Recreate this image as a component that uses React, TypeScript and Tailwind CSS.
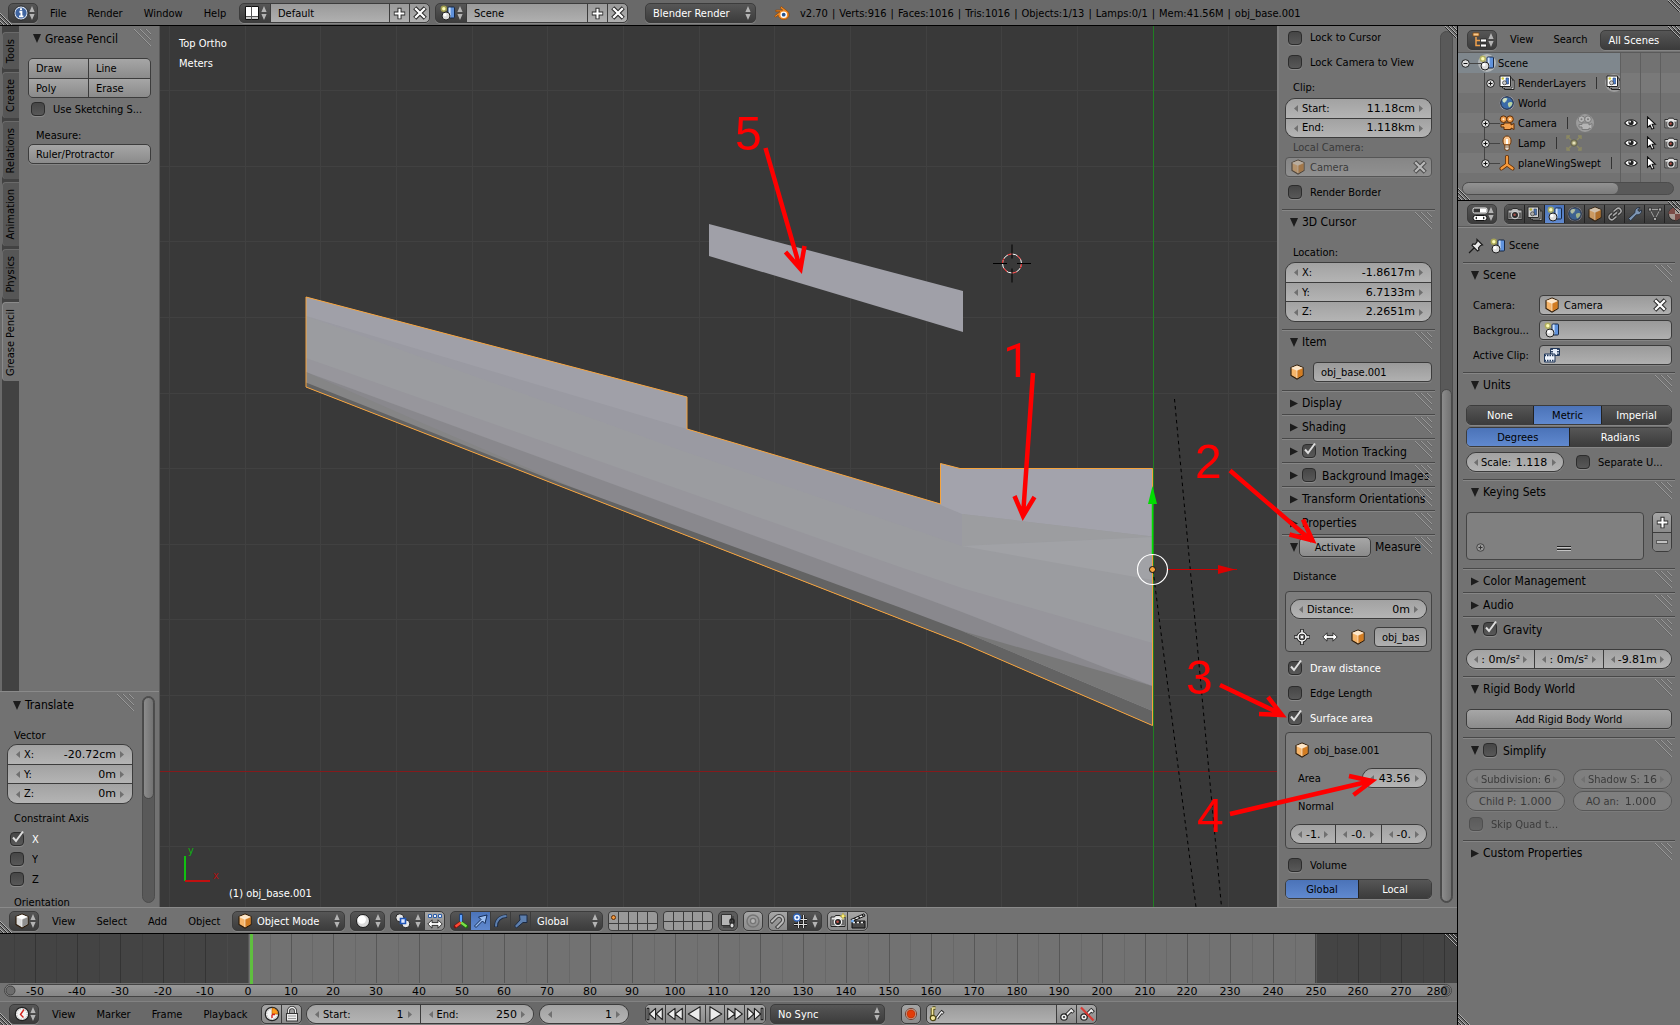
import { ReactNode } from "react";

const WIDGET = "h-5 shrink-0 border border-[#3c3c3c] shadow-[0_1px_0_#858585]";
const TOOL = "bg-gradient-to-b from-[#a6a6a6] to-[#8b8b8b]";
const FIELD = "bg-gradient-to-b from-[#9a9a9a] to-[#b0b0b0]";
const NUMBER = "bg-gradient-to-b from-[#a2a2a2] to-[#b4b4b4]";
const DARK = "bg-gradient-to-b from-[#565656] to-[#3c3c3c]";
const BLUE = "bg-gradient-to-b from-[#4b73b8] to-[#6089cf]";

/* ---------- icons ---------- */

function Icon({ size = 16, children, className = "" }: { size?: number; children: ReactNode; className?: string }) {
  return (
    <svg aria-hidden="true" width={size} height={size} viewBox="0 0 16 16" className={"shrink-0 " + className}>
      {children}
    </svg>
  );
}

const UpDown = () => (
  <svg aria-hidden="true" width="6" height="14" viewBox="0 0 6 14" className="shrink-0" fill="#b4b4b4">
    <path d="M3 0 L5.6 6 H.4Z M3 14 L5.6 8 H.4Z" />
  </svg>
);

const InfoIcon = () => (
  <Icon>
    <circle cx="8" cy="8" r="7" fill="#dfe6f0" stroke="#10141c" strokeWidth=".8" />
    <circle cx="8" cy="8" r="5.6" fill="#3f64a0" />
    <path d="M8 3.2v1.9M6.4 6.8H8.4V11M6 11.4h4.4" stroke="#fff" strokeWidth="1.9" fill="none" />
  </Icon>
);

const LayoutIcon = () => (
  <Icon>
    <path d="M1.500 1.500h13v13h-13z" fill="#fff" stroke="#111" />
    <path d="M7.500 1.500v13M2 11.500h12" stroke="#555" fill="none" />
    <path d="M8 12h6v2H8zM2 12h5v2H2z" fill="#ccc" />
  </Icon>
);

const SceneIcon = ({ size = 16 }: { size?: number }) => (
  <Icon size={size}>
    <rect x="8" y="2" width="6.500" height="11" rx="1" fill="#5f92dc" stroke="#172742" />
    <rect x="8.600" y="2.600" width="2" height="9.500" fill="#cfe0fa" />
    <circle cx="3.800" cy="3.800" r="3.200" fill="#b3b04f" opacity=".8" />
    <circle cx="3.800" cy="3.800" r="1.700" fill="#fdfbb5" />
    <circle cx="6" cy="11" r="4" fill="#dcdcdc" stroke="#222" />
    <circle cx="4.900" cy="9.800" r="1.700" fill="#fff" />
  </Icon>
);

const PlusIcon = () => (
  <Icon size={13}>
    <path d="M8 1v14M1 8h14" stroke="#2a2a2a" strokeWidth="5" />
    <path d="M8 2v12M2 8h12" stroke="#fff" strokeWidth="2.600" />
  </Icon>
);
const CrossIcon = () => (
  <Icon size={14}>
    <path d="M2 2l12 12M14 2 2 14" stroke="#2a2a2a" strokeWidth="5" />
    <path d="M2.500 2.500l11 11M13.500 2.500l-11 11" stroke="#fff" strokeWidth="2.600" />
  </Icon>
);

const BlenderLogo = () => (
  <Icon>
    <path d="M7.300 1.500 13.500 6.200C17 9.600 14.200 14.500 9.700 14.500 6.500 14.500 4.200 12.300 4.200 10.200L1.600 12.200.5 11 6 6.700H1.800V5.100h6.900L6.200 2.900z" fill="#f08a24" stroke="#8a4508" strokeWidth=".7" />
    <circle cx="9.700" cy="9.700" r="3.300" fill="#fff" />
    <circle cx="9.700" cy="9.700" r="1.900" fill="#27548e" />
  </Icon>
);

function Cube({ white = false, size = 16 }: { white?: boolean; size?: number }) {
  const [a, b, c] = white ? ["#ffffff", "#d9d9d9", "#8f8f8f"] : ["#fde6c8", "#f6b56a", "#d27c22"];
  return (
    <Icon size={size}>
      <path d="M8 1 14 3.500V11.500L8 15 2 11.500V3.500Z" fill={b} stroke="#2b1805" strokeWidth="1.100" />
      <path d="M8 1.500 13.500 3.700 8 6.300 2.500 3.700Z" fill={a} />
      <path d="M8 6.300 13.500 3.900V11.200L8 14.300Z" fill={c} />
      <path d="M2.600 3.900 8 6.300 13.400 3.900M8 6.300V14.300" stroke="#fff" strokeWidth=".7" opacity=".8" fill="none" />
    </Icon>
  );
}

const SphereIcon = () => (
  <Icon>
    <circle cx="8" cy="8" r="6.500" fill="#dadada" stroke="#1a1a1a" />
    <circle cx="6.800" cy="6.600" r="4.200" fill="#fff" />
  </Icon>
);

const PivotIcon = () => (
  <Icon>
    <circle cx="4.800" cy="4.800" r="4" fill="#e8e8e8" stroke="#222" />
    <circle cx="10.800" cy="10.800" r="4" fill="#e8e8e8" stroke="#222" />
    <path d="M5.500 5.500h5v5h-5z" fill="#dfe9ff" stroke="#1f55b8" strokeWidth="1.600" />
  </Icon>
);

const HArrow = ({ dots = false }: { dots?: boolean }) => (
  <Icon>
    <path
      d="M.8 10 5 5.800V8.600h6V5.800L15.200 10 11 14.200v-2.800H5v2.800z"
      fill="#fff"
      stroke="#222"
      strokeWidth=".9"
      transform={dots ? "translate(0 1)" : "translate(0 -2)"}
    />
    {dots && <path d="M1.500 1.500h3v3h-3zM6.500 1.500h3v3h-3zM11.500 1.500h3v3h-3z" fill="#e8f0ff" stroke="#2b5ca8" />}
  </Icon>
);

const AxesIcon = () => (
  <Icon>
    <path d="M8 9.500V2" stroke="#1b3f7a" strokeWidth="3.600" strokeLinecap="round" />
    <path d="M8 9.500 2.500 13.500" stroke="#7a1212" strokeWidth="3.600" strokeLinecap="round" />
    <path d="M8 9.500 13.500 13.500" stroke="#1e6b12" strokeWidth="3.600" strokeLinecap="round" />
    <path d="M8 9V2" stroke="#5ca0ff" strokeWidth="2" />
    <path d="M8 9.500 2.500 13.500" stroke="#ff4a33" strokeWidth="2.200" />
    <path d="M8 9.500 13.500 13.500" stroke="#7be04a" strokeWidth="2.200" />
  </Icon>
);
const DiagArrow = () => (
  <Icon>
    <path d="M1.500 13 8 6.500 5.500 4 14 2 12 10.500 9.500 8 3 14.500z" fill="#9dc0f2" stroke="#142c56" />
  </Icon>
);
const ArcIcon = () => (
  <Icon>
    <path d="M3 14C3 7 7 3.500 14 3" stroke="#1c2a42" strokeWidth="3.600" fill="none" />
    <path d="M3 13.500C3 7 7 3.500 13.500 3" stroke="#5d7fae" strokeWidth="2" fill="none" />
  </Icon>
);
const ScaleIcon = () => (
  <Icon>
    <path d="M6.500 2h7.500v7.500H10L3.500 15 1.500 13 7 7z" fill="#5d7fae" stroke="#1c2a42" />
  </Icon>
);

const LayersLockIcon = () => (
  <Icon>
    <path d="M1.500 1.500h10v11h-10z" fill="#b5b5b5" stroke="#333" />
    <path d="M3 14h10M13 3v9" stroke="#333" />
    <rect x="10" y="6" width="4" height="5" rx="2" fill="none" stroke="#222" strokeWidth="1.500" />
    <rect x="10" y="10" width="4" height="5" rx="2" fill="#ddd" stroke="#222" />
  </Icon>
);
const PropIcon = () => (
  <Icon>
    <circle cx="8" cy="8" r="6" fill="none" stroke="#757575" strokeWidth="1.500" />
    <circle cx="8" cy="8" r="2.600" fill="#b5b5b5" stroke="#757575" strokeWidth="1.300" />
  </Icon>
);
const MagnetIcon = () => (
  <Icon>
    <g transform="rotate(45 8 8)" fill="none">
      <path d="M4 14.500V6.500a4 4 0 0 1 8 0V14.500" stroke="#444" strokeWidth="4" />
      <path d="M4 13.500V6.500a4 4 0 0 1 8 0V13.500" stroke="#bbb" strokeWidth="2" />
    </g>
  </Icon>
);
const SnapIcon = () => (
  <Icon>
    <path d="M6.500 3v12M11.500 2v13M2 11.500h13M8 6.500h7" stroke="#161616" strokeWidth="3" />
    <path d="M6.500 3v12M11.500 2v13M2 11.500h13M8 6.500h7" stroke="#ddd" strokeWidth="1.200" />
    <circle cx="5" cy="4.500" r="3.500" fill="#f0f5ff" stroke="#2c62bb" strokeWidth="1.300" />
    <circle cx="5" cy="4.500" r="1.200" fill="#2c62bb" />
  </Icon>
);
const StillIcon = ({ star = false, size = 16 }: { star?: boolean; size?: number }) => (
  <Icon size={size}>
    <path d="M1 4h3.500l1-1.500h5l1 1.500H15v9.500H1z" fill="#e3e3e3" stroke="#222" />
    <path d="M1.500 6.500h13v6h-13z" fill="#686868" />
    <circle cx="8" cy="9" r="3.600" fill="#222" stroke="#f4f4f4" strokeWidth="1.200" />
    <circle cx="7.600" cy="8.800" r="1.300" fill="#c2544a" />
    {star && <path d="M13 0l1 2.300L16 3l-2 1-1 2.400L12 4l-2.200-1L12 2.300z" fill="#fff27a" stroke="#a6962b" strokeWidth=".5" />}
  </Icon>
);
const ClapperIcon = () => (
  <Icon>
    <path d="M2 8h13v7H2z" fill="#4a4a4a" stroke="#111" />
    <path d="M1 6.500 14 .8l1 2.200L2 8.500z" fill="#eee" stroke="#111" />
    <path d="M4 5.500l2 1M8 3.600l2 1.200M12 2l1.500 1.200M4 9.500h2M8 9.500h2M12 9.500h2" stroke="#111" strokeWidth="1.200" />
    <path d="M3 9.500h2M7 9.500h2M11 9.500h2" stroke="#eee" strokeWidth="1.500" />
    <circle cx="2.500" cy="8" r="1.500" fill="#7ab3f5" />
  </Icon>
);

const ClockIcon = ({ wedge = false }: { wedge?: boolean }) => (
  <Icon>
    <circle cx="8" cy="8" r="6.700" fill="#f4f4f4" stroke="#222" strokeWidth="1.200" />
    <circle cx="8" cy="8" r="5.200" fill="none" stroke="#999" strokeWidth="1" strokeDasharray="1 1.700" />
    {wedge && <path d="M8 8V2A6 6 0 0 1 14 8z" fill="#ff9a1a" stroke="#a55b00" strokeWidth=".6" />}
    <path d={wedge ? "M8 8.500v3.500M8 8.500H11" : "M10 3.500 6.500 8.500 9.500 11.500"} stroke="#d3221c" strokeWidth="1.400" fill="none" />
  </Icon>
);
const LockIcon = () => (
  <Icon>
    <path d="M4.500 8V5a3.500 3.500 0 0 1 7 0v3" fill="none" stroke="#333" strokeWidth="3" />
    <path d="M4.500 8V5a3.500 3.500 0 0 1 7 0v3" fill="none" stroke="#eee" strokeWidth="1.300" />
    <rect x="2.500" y="7.500" width="11" height="7.500" fill="#ececec" stroke="#333" />
    <path d="M4 10h8M4 12.500h8" stroke="#999" />
  </Icon>
);

function Transport({ d }: { d: string }) {
  return (
    <Icon size={18}>
      <path d={d} fill="#ececec" stroke="#222" strokeWidth="1" strokeLinejoin="round" />
    </Icon>
  );
}

const RecordIcon = () => (
  <Icon>
    <circle cx="8" cy="8" r="5.500" fill="#f4d9c8" stroke="#5c1a08" strokeWidth=".8" />
    <circle cx="8" cy="8" r="4.200" fill="#e23c08" stroke="#8a2404" strokeWidth=".6" />
  </Icon>
);
const KeyShape = ({ strike = false }: { strike?: boolean }) => (
  <Icon>
    <path d="M6.500 10 12 4.500M11 3l3.500 3.500" stroke="#222" strokeWidth="3.800" />
    <path d="M6.500 10 12 4.500M11.500 3.500l2.500 2.500" stroke="#eee" strokeWidth="1.800" />
    <circle cx="5" cy="11" r="3.200" fill="#eee" stroke="#222" strokeWidth="1.200" />
    <circle cx="5" cy="11" r="1.100" fill="#333" />
    {strike && <path d="M2 1.500 14.500 14.500" stroke="#d93a34" strokeWidth="2.200" />}
  </Icon>
);
const KeyingIcon = () => (
  <Icon>
    <path d="M8 12 12.500 6M11.500 5l3 2.500" stroke="#222" strokeWidth="3.200" />
    <path d="M8 12 12.500 6M12 5.500l2 1.800" stroke="#eee" strokeWidth="1.500" />
    <path d="M3.500 10V2M3.500 2H6.500" stroke="#4b4410" strokeWidth="3.600" />
    <path d="M3.500 10V1.500M3.500 2H6.500" stroke="#f1e59a" strokeWidth="1.700" />
    <circle cx="4" cy="12" r="2.700" fill="#f1e59a" stroke="#4b4410" strokeWidth="1.200" />
  </Icon>
);

const OutlinerIcon = () => (
  <Icon>
    <path d="M1 1h6v3H1z" fill="#f8c98c" stroke="#8c4d0c" strokeWidth=".8" />
    <path d="M4 5v8.500H8M4 8.500H8" stroke="#f0a04b" strokeWidth="1.500" fill="none" />
    <path d="M8.500 7h6v3h-6zM8.500 12h6v3h-6z" fill="#fff" stroke="#222" strokeWidth=".8" />
  </Icon>
);
const RenderLayersIcon = () => (
  <Icon>
    <path d="M5.500 5h9.500v9.500H5.500z" fill="#d8d8d8" stroke="#222" />
    <path d="M3.500 3h9.500v10H3.500z" fill="#eee" stroke="#222" />
    <path d="M1 1h10.500v10.500H1z" fill="#fff" stroke="#222" />
    <path d="M7 3h2.500v6H7z" fill="#4a7fd0" stroke="#1e3c70" strokeWidth=".6" />
    <circle cx="5.500" cy="7.800" r="2" fill="#ccc" stroke="#333" strokeWidth=".7" />
    <circle cx="3.800" cy="3.500" r="1.300" fill="#d2cc3b" />
  </Icon>
);
const WorldIcon = () => (
  <Icon>
    <circle cx="8" cy="8" r="7.300" fill="#b9bdd8" opacity=".7" />
    <circle cx="8" cy="8" r="6.300" fill="#3a6aa8" stroke="#1a2436" />
    <path d="M3.500 4.500C5 3 7.500 2.500 8.500 3.500 8 5.500 6.500 5.500 6 7.500 5 8 3 7 3.500 4.500ZM9 8c2-1.500 4-1 4.500 0-.3 2-1.500 4-3.500 4.500C9.500 11 8.500 10 9 8Z" fill="#b9d3a0" />
    <circle cx="5.700" cy="5" r="2.200" fill="#fff" opacity=".35" />
  </Icon>
);
const CameraIcon = ({ gray = false }: { gray?: boolean }) => (
  <Icon>
    <g fill={gray ? "#b5b5b5" : "#f3a14f"} stroke={gray ? "#7b7b7b" : "#5e2c05"} strokeWidth="1">
      <circle cx="4.500" cy="4.200" r="3.300" />
      <circle cx="11" cy="4.200" r="3.300" />
      <path d="M5 8h7v2l3-1.500v6L12 13v1.500H5V12H2V9.500h3z" />
    </g>
    <circle cx="4.500" cy="4.200" r="1" fill={gray ? "#7b7b7b" : "#fff0da"} />
    <circle cx="11" cy="4.200" r="1" fill={gray ? "#7b7b7b" : "#fff0da"} />
  </Icon>
);
const LampIcon = () => (
  <Icon>
    <path d="M5.500 10C3 7.500 3.500 1 8 1s5 6.500 2.500 9z" fill="#f9c48c" stroke="#6e3506" />
    <path d="M8 4v5" stroke="#fff" strokeWidth="2" />
    <path d="M5.800 10h4.400v4.500L8 15.500l-2.200-1z" fill="#e9e0d6" stroke="#6e3506" strokeWidth=".9" />
    <path d="M6 12h4" stroke="#8b6a4a" />
  </Icon>
);
const LampDataIcon = () => (
  <Icon>
    <path d="M1 4V1h3M12 1h3v3M15 12v3h-3M4 15H1v-3M2 2l3 3M14 2l-3 3M2 14l3-3M14 14l-3-3" stroke="#8d8a62" strokeWidth="1.400" fill="none" />
    <circle cx="8" cy="8" r="3.200" fill="#96926a" stroke="#55533c" strokeWidth=".7" />
    <circle cx="8" cy="8" r="1.600" fill="#e3e0b8" />
  </Icon>
);
const EmptyIcon = () => (
  <Icon>
    <path d="M8 2v7.500L2.500 13.500M8 9.500l5.500 4" stroke="#5e2c05" strokeWidth="4" fill="none" strokeLinecap="round" />
    <path d="M8 2v7.500L2.500 13.500M8 9.500l5.500 4" stroke="#f59a3d" strokeWidth="2.300" fill="none" strokeLinecap="round" />
  </Icon>
);
const EyeIcon = () => (
  <Icon size={14}>
    <path d="M.8 8C4 3 12 3 15.200 8 12 12.500 4 12.500.8 8Z" fill="#fff" stroke="#1c1c1c" strokeWidth="1.200" />
    <circle cx="8" cy="7.500" r="3" fill="#222" />
    <circle cx="7" cy="6.500" r="1" fill="#fff" />
  </Icon>
);
const PointerIcon = () => (
  <Icon size={14}>
    <path d="M4 1v12l3-2.500 2 4.500 2.300-1-2-4.500H13z" fill="#fff" stroke="#111" strokeWidth="1.200" />
  </Icon>
);
const PropertiesIcon = () => (
  <Icon>
    <rect x="1" y="2" width="14" height="5" rx="1.500" fill="#333" stroke="#eee" />
    <rect x="8" y="2.500" width="6.500" height="4" fill="#fff" />
    <rect x="1" y="9.500" width="14" height="5" rx="2.500" fill="#fff" stroke="#111" />
    <path d="M5 10.500 3 12l2 1.500zM11 10.500l2 1.500-2 1.500z" fill="#222" />
  </Icon>
);
const LinkIcon = () => (
  <Icon>
    <g fill="none" transform="rotate(-40 8 8)">
      <path d="M6 5.500H3.500a2.700 2.700 0 0 0 0 5.400H7.500M10 10.500h2.500a2.700 2.700 0 0 0 0-5.400H8.500M5.500 8h5" stroke="#222" strokeWidth="3" />
      <path d="M6 5.500H3.500a2.700 2.700 0 0 0 0 5.400H7.500M10 10.500h2.500a2.700 2.700 0 0 0 0-5.400H8.500M5.500 8h5" stroke="#ccc" strokeWidth="1.500" />
    </g>
  </Icon>
);
const WrenchIcon = () => (
  <Icon>
    <path d="M1.500 12.500 8 6.500C7.500 3.500 10 1 13 1.500L10.800 4l1.200 1.500L14.500 4c.5 3-2 5.200-5 4.700L3.500 15z" fill="#8fb0da" stroke="#1e2a3c" />
  </Icon>
);
const TriIcon = () => (
  <Icon>
    <path d="M3 3.500h10L8 13z" fill="none" stroke="#bbb" />
    <path d="M1.500 2h3v3h-3zM11.500 2h3v3h-3zM6.500 11.500h3v3h-3z" fill="#ccc" stroke="#222" strokeWidth=".8" />
  </Icon>
);
const MaterialIcon = () => (
  <Icon>
    <circle cx="8" cy="8" r="6.500" fill="#c9b7b0" stroke="#222" />
    <path d="M8 1.500A6.500 6.500 0 0 0 1.500 8H8zM8 8v6.500A6.500 6.500 0 0 0 14.500 8z" fill="#8c4c46" />
  </Icon>
);
const PinIcon = () => (
  <Icon>
    <path d="M1 15 6.500 9.500M9 1.500l5.500 5.500-2 .5-2 2.500.5 2-1.500 1L4 7.500l1-1.500 2 .3L9 4z" fill="#e8e8e8" stroke="#1c1c1c" strokeWidth="1.200" />
  </Icon>
);
const ClipIcon = () => (
  <Icon>
    <path d="M6.500 1.500h9v7h-9z" fill="#e6eef8" stroke="#22385a" />
    <path d="M8 1.500v7M14 1.500v7" stroke="#22385a" strokeWidth="1.800" strokeDasharray="1.500 1" />
    <path d="M.5 7h10.500v8H.5z" fill="#eef4fc" stroke="#22385a" />
    <path d="M.5 8.300h10.500M.5 13.700h10.500" stroke="#22385a" strokeWidth="1.800" strokeDasharray="1.500 1" />
  </Icon>
);
const TargetIcon = () => (
  <Icon>
    <path d="M8 0v4M8 12v4M0 8h4M12 8h4" stroke="#222" strokeWidth="3.600" />
    <circle cx="8" cy="8" r="4" fill="#777" stroke="#222" strokeWidth="3.200" />
    <circle cx="8" cy="8" r="4" fill="none" stroke="#fff" strokeWidth="1.500" />
    <path d="M8 .7v3M8 12.300v3M.7 8h3M12.300 8h3" stroke="#fff" strokeWidth="1.500" />
    <circle cx="8" cy="8" r="1.200" fill="#fff" />
  </Icon>
);

/* ---------- widgets ---------- */

const Grip = ({ className = "" }: { className?: string }) => (
  <svg aria-hidden="true" width="17" height="17" className={"pointer-events-none absolute " + className}>
    <path d="M0 0 17 17M6 0 17 11M12 0 17 5" stroke="#999" fill="none" />
    <path d="M-1 0 16 17M5 0 17 12M11 0 17 6" stroke="#5f5f5f" strokeOpacity=".7" fill="none" />
  </svg>
);
const Corner = ({ className = "" }: { className?: string }) => (
  <svg aria-hidden="true" width="12" height="12" className={"pointer-events-none absolute " + className}>
    <path d="M0 0 12 12M4 0 12 8M8 0 12 4" stroke="#b0b0b0" fill="none" />
    <path d="M-1 0 11 12M3 0 12 9M7 0 12 5" stroke="#2a2a2a" fill="none" />
  </svg>
);
const CornerLow = ({ className = "" }: { className?: string }) => (
  <svg aria-hidden="true" width="12" height="12" className={"pointer-events-none absolute " + className}>
    <path d="M0 0 12 12M0 4 8 12M0 8 4 12" stroke="#b0b0b0" fill="none" />
    <path d="M0 1 11 12M0 5 7 12M0 9 3 12" stroke="#2a2a2a" fill="none" />
  </svg>
);

const Tick = ({ left = false }: { left?: boolean }) => (
  <svg aria-hidden="true" width="4" height="7" viewBox="0 0 4 7" className="shrink-0" fill="#707070">
    <path d={left ? "M4 0V7L0 3.500Z" : "M0 0V7L4 3.500Z"} />
  </svg>
);

function Num({
  label,
  value,
  name,
  tight = false,
  ticks = true,
  className = "",
}: {
  label?: string;
  value: string;
  name?: string;
  tight?: boolean;
  ticks?: boolean;
  className?: string;
}) {
  return (
    <label className={`flex min-w-0 flex-1 items-center pt-px ${tight ? "gap-[3px]" : "gap-1"} ${!ticks ? "px-3" : tight ? "px-[7px]" : "px-2"} ${NUMBER} ${className}`}>
      {ticks && <Tick left />}
      {label && <span className="shrink-0">{label}</span>}
      <input
        aria-label={name ?? label}
        defaultValue={value}
        className={`w-full min-w-0 flex-1 bg-transparent font-['DejaVu_Sans',sans-serif] outline-none ${tight ? "text-center" : "text-right"}`}
      />
      {ticks && <Tick />}
    </label>
  );
}

function NumStack({ rows, className = "" }: { rows: [string, string][]; className?: string }) {
  return (
    <div className={`flex flex-col divide-y divide-[#3c3c3c] overflow-hidden rounded-[10px] border border-[#3c3c3c] ${rows.length === 3 ? "h-[60px]" : "h-10"} ${className}`}>
      {rows.map(([l, v]) => (
        <Num key={l} label={l} value={v} />
      ))}
    </div>
  );
}

function Check({ label, checked = false, name, className = "", big = false }: { label?: string; name?: string; checked?: boolean; className?: string; big?: boolean }) {
  return (
    <label className={`flex items-center ${big ? "gap-1.5 text-xs" : "gap-2"} ${className}`}>
      <span className="relative flex size-[14px] shrink-0">
        <input
          type="checkbox"
          aria-label={name ?? label}
          defaultChecked={checked}
          className="peer size-[14px] appearance-none rounded-[4px] border border-[#2c2c2c] bg-gradient-to-b from-[#464646] to-[#585858] shadow-[0_1px_0_#8a8a8a]"
        />
        <svg aria-hidden="true" width="14" height="14" className="pointer-events-none absolute -top-0.5 left-0 hidden overflow-visible peer-checked:block">
          <path d="M3 7.500 6 11 13 1.500" fill="none" stroke="#dedede" strokeWidth="2" />
        </svg>
      </span>
      {label && <span className="truncate pt-px">{label}</span>}
    </label>
  );
}

function Menu({ label, value, width, className = "", pad = "pl-1.5", icon }: { label: string; value: string; width: string; className?: string; pad?: string; icon?: ReactNode }) {
  return (
    <div className={`relative flex items-center pr-1 ${WIDGET} ${DARK} text-white ${width} ${className}`}>
      {icon}
      <select aria-label={label} className={`h-full w-full appearance-none bg-transparent pt-px outline-none ${pad}`}>
        <option className="bg-[#3c3c3c]">{value}</option>
      </select>
      <UpDown />
    </div>
  );
}

function IconMenu({ label, children, width = "w-[30px]", round = "rounded-[5px]" }: { label: string; children: ReactNode; width?: string; round?: string }) {
  return (
    <button aria-label={label} className={`flex items-center justify-between pr-[3px] pl-1 ${WIDGET} ${DARK} ${width} ${round}`}>
      {children}
      <UpDown />
    </button>
  );
}

function IconBtn({ label, children, className }: { label: string; children: ReactNode; className: string }) {
  return (
    <button aria-label={label} className={`flex items-center justify-center ${WIDGET} ${className}`}>
      {children}
    </button>
  );
}

function Section({ title, open = false, check, children, extra, className = "" }: { title?: string; open?: boolean; check?: boolean; children?: ReactNode; extra?: ReactNode; className?: string }) {
  return (
    <section className="border-t border-[#484848] shadow-[inset_0_1px_0_#868686]">
      <header className={`relative flex h-[23px] items-center pt-px pl-2 ${extra ? "gap-px" : "gap-1"}`}>
        <button aria-label={"Toggle " + (title ?? "panel")} className="shrink-0">
          <svg aria-hidden="true" width="8" height="9" fill="#1c1c1c">
            <path d={open ? "M0 0H8L4 9Z" : "M0 .5V8.500L8 4.500Z"} />
          </svg>
        </button>
        {extra}
        {title && check === undefined && <h2 className="text-xs whitespace-nowrap">{title}</h2>}
        {title && check !== undefined && <Check label={title} checked={check} big />}
        <Grip className="top-0.5 right-[3px]" />
      </header>
      {children && <div className={"px-[3px] " + className}>{children}</div>}
    </section>
  );
}

/* ---------- bars ---------- */

const MENU_TEXT = "h-full whitespace-nowrap";

function TopBar() {
  const stats = ["v2.70", "Verts:916", "Faces:1016", "Tris:1016", "Objects:1/13", "Lamps:0/1", "Mem:41.56M", "obj_base.001"];
  return (
    <header className="relative flex h-[26px] shrink-0 items-center border-b border-black bg-[#696969] pt-px pl-2">
      <CornerLow className="bottom-0 left-0" />
      <IconMenu label="Editor type: Info"><InfoIcon /></IconMenu>
      <nav className="ml-3 flex w-[189px] gap-[21px] pt-px">
        <button className={MENU_TEXT}>File</button>
        <button className={MENU_TEXT}>Render</button>
        <button className={MENU_TEXT}>Window</button>
        <button className={MENU_TEXT}>Help</button>
      </nav>
      <div className="flex">
        <IconMenu label="Choose screen layout" width="w-8" round="rounded-l-[5px]"><LayoutIcon /></IconMenu>
        <input aria-label="Screen layout" defaultValue="Default" className={`-ml-px w-[120px] px-[7px] pt-px outline-none ${WIDGET} ${FIELD}`} />
        <IconBtn label="Add layout" className={`-ml-px w-[21px] ${FIELD}`}><PlusIcon /></IconBtn>
        <IconBtn label="Delete layout" className={`-ml-px w-[21px] rounded-r-[5px] ${FIELD}`}><CrossIcon /></IconBtn>
      </div>
      <div className="ml-[5px] flex">
        <IconMenu label="Choose scene" width="w-8" round="rounded-l-[5px]"><SceneIcon /></IconMenu>
        <input aria-label="Scene name" defaultValue="Scene" className={`-ml-px w-[122px] px-[7px] pt-px outline-none ${WIDGET} ${FIELD}`} />
        <IconBtn label="Add scene" className={`-ml-px w-[21px] ${FIELD}`}><PlusIcon /></IconBtn>
        <IconBtn label="Delete scene" className={`-ml-px w-[21px] rounded-r-[5px] ${FIELD}`}><CrossIcon /></IconBtn>
      </div>
      <Menu label="Render engine" value="Blender Render" width="w-[111px]" className="ml-[17px] rounded-[5px]" pad="pl-[7px]" />
      <div className="ml-[18px] flex items-center gap-2.5 whitespace-nowrap">
        <BlenderLogo />
        <p className="flex gap-1 pt-px">
          {stats.map((s, i) => (
            <span key={s} className="flex gap-1">
              {i > 0 && <span>|</span>}
              <span>{s}</span>
            </span>
          ))}
        </p>
      </div>
      <Corner className="top-0 right-0" />
    </header>
  );
}

function LayerGrid({ label, active = false }: { label: string; active?: boolean }) {
  return (
    <div aria-label={label} className="grid h-5 w-[50px] grid-cols-5 gap-px overflow-hidden rounded-[4px] border border-[#3c3c3c] bg-[#3c3c3c]">
      {Array.from({ length: 10 }, (_, i) => (
        <button key={i} aria-label={`${label} ${i + 1}`} className="flex items-center justify-center bg-[#999999]">
          {active && i === 0 && <span className="size-[5px] rounded-full border border-[#5e2c05] bg-[#f59a3d]" />}
        </button>
      ))}
    </div>
  );
}

function ViewHeader() {
  return (
    <div className="relative flex h-[26px] shrink-0 items-center border-t border-[#8a8a8a] bg-[#727272] pt-px pl-[9px]">
      <CornerLow className="bottom-0 left-0" />
      <IconMenu label="Editor type: 3D View"><Cube white /></IconMenu>
      <nav className="ml-[13px] flex w-[180px] gap-[21px] pt-px">
        <button className={MENU_TEXT}>View</button>
        <button className={MENU_TEXT}>Select</button>
        <button className={MENU_TEXT}>Add</button>
        <button className={MENU_TEXT}>Object</button>
      </nav>
      <Menu label="Mode" value="Object Mode" width="w-[113px]" className="rounded-[5px] pl-1" pad="pl-1" icon={<Cube />} />
      <div className="ml-[5px]"><IconMenu label="Viewport shading" width="w-[35px]"><SphereIcon /></IconMenu></div>
      <div className="ml-[5px] flex">
        <IconMenu label="Pivot point" width="w-[35px]" round="rounded-l-[5px]"><PivotIcon /></IconMenu>
        <IconBtn label="Manipulate centers" className={`-ml-px w-[21px] rounded-r-[5px] ${TOOL}`}><HArrow dots /></IconBtn>
      </div>
      <div className="ml-[5px] flex">
        <IconBtn label="Manipulator" className={`w-[21px] rounded-l-[5px] ${DARK}`}><AxesIcon /></IconBtn>
        <IconBtn label="Translate" className={`-ml-px w-[21px] ${BLUE}`}><DiagArrow /></IconBtn>
        <IconBtn label="Rotate" className={`-ml-px w-[21px] ${DARK}`}><ArcIcon /></IconBtn>
        <IconBtn label="Scale" className={`-ml-px w-[21px] ${DARK}`}><ScaleIcon /></IconBtn>
        <Menu label="Transform orientation" value="Global" width="w-[73px]" className="-ml-px rounded-r-[5px]" />
      </div>
      <div className="ml-[5px] flex gap-[5px]">
        <LayerGrid label="Layer" active />
        <LayerGrid label="Extra layer" />
        <IconBtn label="Lock layers" className="w-5 rounded-[5px] bg-[#5c5c5c]"><LayersLockIcon /></IconBtn>
        <IconBtn label="Proportional editing" className={`w-5 rounded-[5px] ${TOOL}`}><PropIcon /></IconBtn>
      </div>
      <div className="ml-[5px] flex">
        <IconBtn label="Snap" className={`w-5 rounded-l-[5px] ${TOOL}`}><MagnetIcon /></IconBtn>
        <IconMenu label="Snap element" width="w-[35px]" round="-ml-px rounded-r-[5px]"><SnapIcon /></IconMenu>
      </div>
      <div className="ml-[5px] flex">
        <IconBtn label="Render preview" className={`w-[21px] rounded-l-[5px] ${TOOL}`}><StillIcon star /></IconBtn>
        <IconBtn label="Render animation preview" className={`-ml-px w-[21px] rounded-r-[5px] ${TOOL}`}><ClapperIcon /></IconBtn>
      </div>
    </div>
  );
}

/* ---------- tool shelf ---------- */

function ToolShelf() {
  const tabs = ["Tools", "Create", "Relations", "Animation", "Physics", "Grease Pencil"];
  return (
    <aside className="flex w-[159px] shrink-0 flex-col bg-[#727272]">
      <div className="flex min-h-0 flex-1">
        <div role="tablist" className="flex w-[19px] shrink-0 flex-col gap-[3px] border-l-2 border-[#6a6a6a] bg-[#424242] pt-1.5">
          {tabs.map((t) => (
            <button
              key={t}
              role="tab"
              aria-selected={t === "Grease Pencil"}
              className={`flex w-[17px] items-center justify-center rounded-l-[4px] border-t border-l py-[6px] ${t === "Grease Pencil" ? "border-[#8a8a8a] bg-[#727272]" : "border-[#6a6a6a] bg-[#565656]"}`}
            >
              <span className="rotate-180 leading-4 [writing-mode:vertical-rl]">{t}</span>
            </button>
          ))}
        </div>
        <div className="relative flex min-w-0 flex-1 flex-col pr-2 pl-[9px]">
          <Grip className="top-[3px] right-2" />
          <header className="flex h-6 items-center gap-1 pt-px pl-[5px]">
            <svg aria-hidden="true" width="8" height="9" fill="#1c1c1c"><path d="M0 0H8L4 9Z" /></svg>
            <h2 className="text-xs">Grease Pencil</h2>
          </header>
          <div className="mt-2 grid h-10 grid-cols-[59px_1fr] gap-px overflow-hidden rounded-[5px] border border-[#3c3c3c] bg-[#3c3c3c]">
            {["Draw", "Line", "Poly", "Erase"].map((b) => (
              <button key={b} className={`pt-0.5 pl-[7px] text-left ${TOOL}`}>{b}</button>
            ))}
          </div>
          <Check label="Use Sketching S..." className="h-[22px] pl-[3px]" />
          <p className="mt-1.5 h-[18px] pl-2 leading-5">Measure:</p>
          <button className={`rounded-[5px] pt-px pl-[7px] text-left ${WIDGET} ${TOOL}`}>Ruler/Protractor</button>
        </div>
      </div>
      <div className="relative flex h-[216px] shrink-0 overflow-hidden border-t border-[#8a8a8a] pr-1 pl-[7px]">
        <div className="relative min-w-0 flex-1">
          <Grip className="top-0.5 right-2" />
          <header className="flex h-[26px] items-center gap-1 pl-1.5">
            <svg aria-hidden="true" width="8" height="9" fill="#1c1c1c"><path d="M0 0H8L4 9Z" /></svg>
            <h2 className="text-xs">Translate</h2>
          </header>
          <p className="mt-2 h-[18px] pl-[7px] leading-5">Vector</p>
          <NumStack className="mr-[9px]" rows={[["X:", "-20.72cm"], ["Y:", "0m"], ["Z:", "0m"]]} />
          <p className="mt-[5px] h-5 pl-[7px] leading-5">Constraint Axis</p>
          <Check label="X" checked className="h-5 pl-[3px] text-white" />
          <Check label="Y" className="h-5 pl-[3px]" />
          <Check label="Z" className="h-5 pl-[3px]" />
          <p className="mt-2 pl-[7px] leading-3">Orientation</p>
        </div>
        <div className="mt-1 mb-1 w-[13px] rounded-full border border-[#4c4c4c] bg-[#595959]">
          <div className="h-[102px] rounded-full border border-[#4a4a4a] bg-gradient-to-r from-[#8c8c8c] to-[#727272]" />
        </div>
      </div>
    </aside>
  );
}

/* ---------- 3D viewport ---------- */

function Viewport() {
  const vx = Array.from({ length: 15 }, (_, i) => 169.5 + Math.round(i * 75.66));
  const hy = Array.from({ length: 11 }, (_, i) => 90.5 + Math.round(i * 75.64));
  return (
    <main className="relative min-w-0 flex-1 overflow-hidden border-l border-[#5a5a5a] bg-[#393939]">
      <svg aria-label="Top orthographic view of a swept wing" className="absolute inset-0 h-full w-full">
        <g transform="translate(-160 -26)">
          <g stroke="#414141">
            {vx.map((x) => <line key={x} x1={x} x2={x} y1="0" y2="1400" />)}
            {hy.map((y) => <line key={y} y1={y} y2={y} x1="0" x2="2400" />)}
          </g>
          <line x1="0" x2="2400" y1="771.500" y2="771.500" stroke="#841a1c" />
          <line x1="1153.500" x2="1153.500" y1="0" y2="1400" stroke="#1f7f22" />
          <g>
            <path d="M306 297 687 397V429L940.500 504V463.500L960 468.500H1152.500V725.500L962 643 306 387Z" fill="#9b9ca0" />
            <path d="M306 297 687 397V429L680 433 306 316Z" fill="#a0a0a8" />
            <path d="M306 316 687 429 940.500 504 962 514V546L680 450Z" fill="#9a9aa2" />
            <path d="M940.500 463.500 960 468.500H1152.500V536.500L962 514 940.500 505Z" fill="#a3a3ac" />
            <path d="M962 514 1152.500 536.500 962 546Z" fill="#9c9da0" />
            <path d="M962 546 1152.500 537V580Z" fill="#a1a2a6" />
            <path d="M306 358 900 567 962 588 1152.500 643V686L962 612 306 372Z" fill="#97969c" />
            <path d="M306 372 900 589 962 612 1152.500 686 962 643 306 387Z" fill="#89888d" />
            <path d="M306 372 420 422 640 516 900 608 962 631 1152.500 711V725.500L962 643 306 387Z" fill="#858586" />
            <path d="M306 382.500 560 483 900 607.500 962 631 1152.500 711V725.500L962 643 306 387Z" fill="#636363" />
            <path d="M962 631 1152.500 686V711Z" fill="#787878" />
            <path d="M306 387V297L687 397V429L940.500 504V463.500L960 468.500H1152.500V725.500L962 643Z" fill="none" stroke="#f6a33c" />
          </g>
          <path d="M709 224 963 291V332L709 256Z" fill="#a0a0a8" />
          <g stroke="#000" strokeDasharray="3.500 3.500">
            <line x1="1153" y1="570" x2="1196" y2="907" />
            <line x1="1174.500" y1="399" x2="1221.500" y2="907" />
          </g>
          <path d="M1152.500 554V503" stroke="#00dd00" strokeWidth="1.500" />
          <path d="M1148 504h9L1152.500 486Z" fill="#00dd00" />
          <path d="M1168 569.500H1237" stroke="#c00" />
          <path d="M1218 565v9L1235 569.500Z" fill="#dc0000" />
          <circle cx="1152.500" cy="569.500" r="15" fill="none" stroke="#fff" strokeWidth="1.200" />
          <circle cx="1152.500" cy="569.500" r="3" fill="#f6a33c" stroke="#111" />
          <g transform="translate(1012 263.500)" fill="none">
            <circle r="9.500" stroke="#fff" />
            <circle r="9.500" stroke="#e01010" strokeDasharray="5 5" />
            <path d="M-19 0H-5M5 0H19M0-19V-5M0 5V19" stroke="#000" />
          </g>
          <path d="M185 856V881" stroke="#10c010" strokeWidth="2" />
          <path d="M185 881H210" stroke="#c01010" strokeWidth="2" />
          <text x="188" y="854" fill="#10b010" fontSize="11">y</text>
          <text x="213" y="879" fill="#b01010" fontSize="11">x</text>
        </g>
      </svg>
      <p className="absolute top-2 left-[19px] leading-5 text-white">Top Ortho<br />Meters</p>
      <p className="absolute bottom-[3px] left-[69px] leading-5 text-white">(1) obj_base.001</p>
    </main>
  );
}

/* ---------- N panel ---------- */

function ViewProperties() {
  return (
    <aside className="relative flex w-[180px] shrink-0 overflow-hidden border-l-2 border-[#7d7d7d] bg-[#727272] pr-1 pl-[3px]">
      <div className="w-[153px] shrink-0">
        <div className="px-[3px]">
          <Check label="Lock to Cursor" className="h-[23px] pl-[3px]" />
          <Check label="Lock Camera to View" className="h-[26px] pl-[3px]" />
          <p className="mt-[3px] h-5 pl-2 leading-5">Clip:</p>
          <NumStack rows={[["Start:", "11.18cm"], ["End:", "1.118km"]]} />
          <div className="opacity-50">
            <p className="h-[19px] pl-2 leading-5">Local Camera:</p>
            <div className={`flex items-center gap-1 rounded-[4px] px-1 ${WIDGET} ${FIELD}`}>
              <Cube />
              <input aria-label="Local camera" defaultValue="Camera" className="min-w-0 flex-1 bg-transparent pt-px outline-none" />
              <button aria-label="Clear local camera"><CrossIcon /></button>
            </div>
          </div>
          <Check label="Render Border" className="mt-[5px] mb-[7px] h-5 pl-[3px]" />
        </div>
        <Section title="3D Cursor" open className="pt-[10px] pb-[7px]">
          <p className="h-[19px] pl-2 leading-5">Location:</p>
          <NumStack rows={[["X:", "-1.8617m"], ["Y:", "6.7133m"], ["Z:", "2.2651m"]]} />
        </Section>
        <Section title="Item" open className="flex items-center pt-[9px] pb-2">
          <span className="flex w-7 pl-1"><Cube /></span>
          <input aria-label="Object name" defaultValue="obj_base.001" className={`min-w-0 flex-1 rounded-[4px] px-[7px] pt-px outline-none ${WIDGET} ${FIELD}`} />
        </Section>
        <Section title="Display" />
        <Section title="Shading" />
        <Section title="Motion Tracking" check />
        <Section title="Background Images" check={false} />
        <Section title="Transform Orientations" />
        <Section title="Properties" />
        <Section
          open
          extra={
            <>
              <button className={`w-[72px] rounded-[5px] pt-px ${WIDGET} ${TOOL}`}>Activate</button>
              <h2 className="pl-[3px] text-xs">Measure</h2>
            </>
          }
        >
          <p className="mt-[9px] h-5 pl-2 leading-5">Distance</p>
          <div className="mt-1 rounded-[4px] border border-[#444] bg-[#7d7d7d] px-1 pt-[7px] pb-1">
            <div className={`flex overflow-hidden rounded-[10px] ${WIDGET}`}><Num label="Distance:" value="0m" /></div>
            <div className="mt-2 flex h-5 items-center justify-between">
              <div className="flex items-center gap-3 pl-1">
                <button aria-label="Measure from cursor"><TargetIcon /></button>
                <button aria-label="Swap"><HArrow /></button>
                <Cube />
              </div>
              <input aria-label="Measure object" defaultValue="obj_bas" className={`w-[53px] rounded-[4px] px-[7px] pt-px outline-none ${WIDGET} ${FIELD}`} />
            </div>
          </div>
          <Check label="Draw distance" checked className="mt-1.5 h-5 pl-[3px] text-white" />
          <Check label="Edge Length" className="mt-[5px] h-5 pl-[3px]" />
          <Check label="Surface area" checked className="mt-[5px] h-5 pl-[3px] text-white" />
          <div className="mt-1 rounded-[4px] border border-[#444] bg-[#7d7d7d] px-1 pt-[7px] pb-1">
            <p className="flex h-5 items-center gap-1 pl-1"><Cube /><span className="pt-px">obj_base.001</span></p>
            <div className="mt-2 flex h-5 items-center justify-between pl-2">
              <span className="pt-px">Area</span>
              <div className={`flex w-[65px] overflow-hidden rounded-[10px] ${WIDGET}`}><Num name="Area" value="43.56" tight /></div>
            </div>
            <p className="mt-[9px] h-5 pl-2 leading-5">Normal</p>
            <div className={`mt-[7px] flex divide-x divide-[#3c3c3c] overflow-hidden rounded-[10px] ${WIDGET}`}>
              <Num name="Normal X" value="-1." tight />
              <Num name="Normal Y" value="-0." tight />
              <Num name="Normal Z" value="-0." tight />
            </div>
          </div>
          <Check label="Volume" className="mt-1.5 h-5 pl-[3px]" />
          <div className={`mt-1 flex divide-x divide-[#222] overflow-hidden rounded-[5px] ${WIDGET}`}>
            <button className={`flex-1 pt-px text-black ${BLUE}`}>Global</button>
            <button className={`flex-1 pt-px text-white ${DARK}`}>Local</button>
          </div>
        </Section>
      </div>
      <div className="mt-[5px] mb-1 ml-auto flex w-[13px] flex-col justify-end rounded-full border border-[#4c4c4c] bg-[#595959]">
        <div className="h-[59%] rounded-full border border-[#4a4a4a] bg-gradient-to-r from-[#8c8c8c] to-[#727272]" />
      </div>
      <Corner className="top-0 right-0" />
    </aside>
  );
}

/* ---------- timeline ---------- */

function Timeline() {
  const zero = 248;
  const step = 42.7;
  const majors = Array.from({ length: 34 }, (_, i) => (i - 5) * 10);
  return (
    <section className="relative shrink-0 border-t border-black bg-[#727272]">
      <svg aria-label="Timeline" className="block h-[67px] w-full">
        <defs>
          <linearGradient id="ruler" x1="0" y1="0" x2="0" y2="1">
            <stop offset="0" stopColor="#999" />
            <stop offset="1" stopColor="#858585" />
          </linearGradient>
        </defs>
        <rect x="0" width={zero} height="49" fill="#444" />
        <rect x="1315" width="1200" height="49" fill="#444" />
        {majors.map((f) => {
          const x = Math.round(zero + (f / 10) * step);
          return (
            <g key={f} stroke={f < 0 || f > 250 ? "#343434" : "#575757"}>
              <line x1={x + 0.5} x2={x + 0.5} y1="0" y2="49" />
              <line x1={x - 20.5} x2={x - 20.5} y1="0" y2="49" opacity=".35" />
            </g>
          );
        })}
        <rect x="250" width="3" height="50" fill="#5fbf3f" />
        <rect x="4.500" y="50.500" width="1447" height="12" rx="6" fill="url(#ruler)" stroke="#444" />
        <circle cx="10.500" cy="56.500" r="4.500" fill="#6c6c6c" stroke="#444" />
        <circle cx="1445.500" cy="56.500" r="4.500" fill="#6c6c6c" stroke="#444" />
        <g fontSize="11" textAnchor="middle" className="font-['DejaVu_Sans',sans-serif]">
          {majors.filter((f) => f <= 280).map((f) => (
            <text key={f} x={f === 280 ? 1437 : Math.round(zero + (f / 10) * step)} y="61">{f}</text>
          ))}
        </g>
      </svg>
      <div className="flex h-6 items-center border-t border-[#828282] bg-[#696969] pt-px pl-[9px]">
        <IconMenu label="Editor type: Timeline"><ClockIcon /></IconMenu>
        <nav className="ml-[13px] flex w-[209px] gap-[21px] pt-px">
          <button className={MENU_TEXT}>View</button>
          <button className={MENU_TEXT}>Marker</button>
          <button className={MENU_TEXT}>Frame</button>
          <button className={MENU_TEXT}>Playback</button>
        </nav>
        <IconBtn label="Use preview range" className={`w-[21px] rounded-l-[5px] ${TOOL}`}><ClockIcon wedge /></IconBtn>
        <IconBtn label="Lock time cursor" className={`-ml-px w-[21px] rounded-r-[5px] ${TOOL}`}><LockIcon /></IconBtn>
        <div className={`ml-1 flex w-[228px] divide-x divide-[#3c3c3c] overflow-hidden rounded-[10px] ${WIDGET}`}>
          <Num label="Start:" value="1" />
          <Num label="End:" value="250" />
        </div>
        <div className={`ml-[5px] flex w-[90px] overflow-hidden rounded-[10px] ${WIDGET}`}><Num name="Current frame" value="1" /></div>
        <div className={`ml-4 grid w-[121px] grid-cols-6 divide-x divide-[#3c3c3c] overflow-hidden rounded-[5px] ${WIDGET}`}>
          {[
            ["Jump to start", "M1 3h1.500v10H1zM8.500 3v10L3 8zM14.500 3v10L9 8z"],
            ["Previous keyframe", "M8 3v10L1.500 8zM14.500 3v10L8 8z"],
            ["Play reverse", "M12.500 1.500v13L2 8z"],
            ["Play", "M3.500 1.500v13L14 8z"],
            ["Next keyframe", "M1.500 3v10L8 8zM8 3v10L14.500 8z"],
            ["Jump to end", "M1.500 3v10L7 8zM7.500 3v10L13 8zM13.500 3H15v10h-1.500z"],
          ].map(([n, d]) => (
            <button key={n} aria-label={n} className={`flex items-center justify-center ${TOOL}`}><Transport d={d} /></button>
          ))}
        </div>
        <Menu label="Sync" value="No Sync" width="w-[115px]" className="ml-1 rounded-[5px]" pad="pl-[7px]" />
        <IconBtn label="Record" className={`ml-4 w-5 rounded-[5px] ${TOOL}`}><RecordIcon /></IconBtn>
        <div className={`ml-[5px] flex w-[131px] items-center rounded-l-[5px] pl-0.5 ${WIDGET} ${FIELD}`}>
          <KeyingIcon />
          <input aria-label="Active keying set" className="min-w-0 flex-1 bg-transparent outline-none" />
        </div>
        <IconBtn label="Insert keyframe" className={`-ml-px w-[21px] ${TOOL}`}><KeyShape /></IconBtn>
        <IconBtn label="Delete keyframe" className={`-ml-px w-[21px] rounded-r-[5px] ${TOOL}`}><KeyShape strike /></IconBtn>
      </div>
      <CornerLow className="bottom-0 left-0" />
      <Corner className="top-0 right-0" />
    </section>
  );
}

/* ---------- outliner ---------- */

const Expander = ({ minus = false }: { minus?: boolean }) => (
  <svg aria-hidden="true" width="9" height="9" className="relative shrink-0">
    <circle cx="4.500" cy="4.500" r="3.800" fill="#ddd" stroke="#222" />
    <path d={minus ? "M2.500 4.500h4" : "M2.500 4.500h4M4.500 2.500v4"} stroke="#111" />
  </svg>
);

function Outliner() {
  const rows: { name: string; pad: string; icon: ReactNode; exp?: boolean; data?: ReactNode; toggles?: boolean; bar?: boolean }[] = [
    { name: "RenderLayers", pad: "pl-7", exp: true, icon: <RenderLayersIcon />, data: <RenderLayersIcon />, bar: true },
    { name: "World", pad: "pl-[41px]", icon: <WorldIcon /> },
    { name: "Camera", pad: "pl-[23px]", exp: true, icon: <CameraIcon />, data: <CameraIcon gray />, toggles: true, bar: true },
    { name: "Lamp", pad: "pl-[23px]", exp: true, icon: <LampIcon />, data: <LampDataIcon />, toggles: true, bar: true },
    { name: "planeWingSwept", pad: "pl-[23px]", exp: true, icon: <EmptyIcon />, toggles: true, bar: true },
  ];
  const cell = "flex w-5 shrink-0 items-center justify-center border-l border-[#5f5f5f]";
  return (
    <section className="relative h-[175px] shrink-0 overflow-hidden border-b border-black bg-[#727272]">
      <div className="flex h-[27px] items-center overflow-hidden border-b border-[#5a5a5a] pt-0.5 pl-[9px]">
        <IconMenu label="Editor type: Outliner"><OutlinerIcon /></IconMenu>
        <button className="ml-[13px]">View</button>
        <button className="ml-5">Search</button>
        <Menu label="Display mode" value="All Scenes" width="w-[110px]" className="ml-[13px] rounded-[5px]" pad="pl-[7px]" />
      </div>
      <div className="relative">
        <svg aria-hidden="true" className="absolute inset-0 h-full w-full" stroke="#444" fill="none">
          <path d="M12 10.500H24M26.500 20V110.500M26.500 70.500H42M26.500 90.500H42M26.500 110.500H42" />
        </svg>
        <div className="flex h-5">
          <div className="flex flex-1 items-center bg-[#7f878d] pl-[3px]">
            <Expander minus />
            <span className="ml-2 flex size-[18px] items-center justify-center rounded-full bg-[#b4b8ba]"><SceneIcon /></span>
            <span className="ml-0.5 pt-0.5">Scene</span>
          </div>
          <span className={cell} /><span className={cell} /><span className={cell} />
        </div>
        {rows.map((r, i) => (
          <div key={r.name} className={`flex h-5 ${i % 2 ? "" : "bg-white/5"}`}>
            <div className={`relative flex min-w-0 flex-1 items-center overflow-hidden whitespace-nowrap ${r.pad}`}>
              {r.exp && <Expander />}
              <span className={r.name === "RenderLayers" ? "ml-1" : r.exp ? "ml-[9px]" : ""}>{r.icon}</span>
              <span className="ml-[3px] pt-0.5">{r.name}</span>
              {r.bar && <span className="mr-2 ml-2.5 h-3 w-px shrink-0 bg-[#333]" />}
              {r.data && (
                <span className={`flex size-[18px] shrink-0 items-center justify-center rounded-full ${r.name === "Lamp" ? "" : "bg-[#9c9c9c]"}`}>{r.data}</span>
              )}
            </div>
            <span className={cell}>{r.toggles && <EyeIcon />}</span>
            <span className={cell}>{r.toggles && <PointerIcon />}</span>
            <span className={cell}>{r.toggles && <StillIcon size={14} />}</span>
          </div>
        ))}
        <div className="flex h-[9px]">
          <span className="flex-1" /><span className={cell} /><span className={cell} /><span className={cell} />
        </div>
      </div>
      <div className="mr-1.5 ml-1 h-[13px] rounded-full border border-[#4c4c4c] bg-[#595959]">
        <div className="h-full w-[74%] rounded-full bg-gradient-to-b from-[#929292] to-[#7c7c7c]" />
      </div>
      <CornerLow className="bottom-0 left-0" />
      <Corner className="top-0 right-0" />
    </section>
  );
}

/* ---------- properties ---------- */

function PropRow({ label, children }: { label: string; children: ReactNode }) {
  return (
    <div className="flex h-5 items-center">
      <span className="w-[73px] shrink-0 pt-px pl-[7px]">{label}</span>
      <div className={`flex min-w-0 flex-1 items-center gap-1 rounded-[4px] px-1 ${WIDGET} ${FIELD}`}>{children}</div>
    </div>
  );
}

const SEG = `flex divide-x divide-[#222] overflow-hidden rounded-[5px] ${WIDGET}`;

function Properties() {
  const tabs: [string, ReactNode][] = [
    ["Render", <StillIcon />], ["Render layers", <RenderLayersIcon />], ["Scene", <SceneIcon />], ["World", <WorldIcon />], ["Object", <Cube />],
    ["Constraints", <LinkIcon />], ["Modifiers", <WrenchIcon />], ["Data", <TriIcon />], ["Material", <MaterialIcon />],
  ];
  return (
    <section className="relative min-h-0 flex-1 overflow-hidden bg-[#727272]">
      <div className="flex h-[27px] items-center border-b border-[#8a8a8a] pl-[9px] shadow-[inset_0_-1px_0_#5a5a5a]">
        <IconMenu label="Editor type: Properties"><PropertiesIcon /></IconMenu>
        <div className={`ml-[7px] flex w-[190px] divide-x divide-[#222] overflow-hidden rounded-l-[5px] ${WIDGET}`}>
          {tabs.map(([n, icon]) => (
            <button key={n} aria-label={n} className={`flex w-5 shrink-0 items-center justify-center ${n === "Scene" ? BLUE : DARK}`}>
              <span className={n === "Scene" ? "" : "opacity-75"}>{icon}</span>
            </button>
          ))}
        </div>
      </div>
      <div className="flex h-[34px] items-center gap-1.5 pt-px pl-2.5">
        <button aria-label="Pin"><PinIcon /></button>
        <span className="flex items-center gap-[3px]"><SceneIcon /><span className="pt-px">Scene</span></span>
      </div>
      <div className="mr-[5px] ml-[5px]">
        <Section title="Scene" open className="flex flex-col gap-[5px] pt-[9px] pb-[7px]">
          <PropRow label="Camera:">
            <Cube />
            <input aria-label="Camera" defaultValue="Camera" className="min-w-0 flex-1 bg-transparent pt-px outline-none" />
            <button aria-label="Clear camera"><CrossIcon /></button>
          </PropRow>
          <PropRow label="Backgrou...">
            <SceneIcon />
            <input aria-label="Background" className="min-w-0 flex-1 bg-transparent outline-none" />
          </PropRow>
          <PropRow label="Active Clip:">
            <ClipIcon />
            <input aria-label="Active clip" className="min-w-0 flex-1 bg-transparent outline-none" />
          </PropRow>
        </Section>
        <Section title="Units" open className="pt-[9px] pb-[7px]">
          <div className={SEG}>
            <button className={`w-[67px] pt-px text-white ${DARK}`}>None</button>
            <button className={`w-[68px] pt-px ${BLUE}`}>Metric</button>
            <button className={`flex-1 pt-px text-white ${DARK}`}>Imperial</button>
          </div>
          <div className={`mt-0.5 ${SEG}`}>
            <button className={`flex-1 pt-px ${BLUE}`}>Degrees</button>
            <button className={`flex-1 pt-px text-white ${DARK}`}>Radians</button>
          </div>
          <div className="mt-[5px] flex gap-3">
            <div className={`flex w-[98px] overflow-hidden rounded-[10px] ${WIDGET}`}><Num label="Scale:" value="1.118" tight /></div>
            <Check label="Separate U..." name="Separate Units" className="min-w-0" />
          </div>
        </Section>
        <Section title="Keying Sets" open className="flex items-start justify-between pt-[9px] pb-2">
          <div className="relative h-12 w-[178px] rounded-[4px] border border-[#444] bg-[#808080]">
            <svg aria-hidden="true" className="absolute inset-0 h-full w-full">
              <circle cx="13.500" cy="34.500" r="3.800" fill="#999" stroke="#444" />
              <path d="M11.500 34.500h4M13.500 32.500v4" stroke="#333" />
              <path d="M90 33.500h14M90 36.500h14" stroke="#222" />
              <path d="M90 34.500h14M90 37.500h14" stroke="#c4c4c4" />
            </svg>
          </div>
          <div className="flex h-10 w-5 flex-col divide-y divide-[#3c3c3c] overflow-hidden rounded-[5px] border border-[#3c3c3c]">
            <button aria-label="Add keying set" className={`flex flex-1 items-center justify-center ${TOOL}`}><PlusIcon /></button>
            <button aria-label="Remove keying set" className="flex flex-1 items-center justify-center bg-[#858585]">
              <span className="h-1 w-3 border border-[#5a5a5a] bg-[#c0c0c0]" />
            </button>
          </div>
        </Section>
        <Section title="Color Management" />
        <Section title="Audio" />
        <Section title="Gravity" open check className="pt-[9px] pb-[7px]">
          <div className={`flex divide-x divide-[#3c3c3c] overflow-hidden rounded-[10px] ${WIDGET}`}>
            <Num name="Gravity X" value=": 0m/s²" tight />
            <Num name="Gravity Y" value=": 0m/s²" tight />
            <Num name="Gravity Z" value="-9.81m/" tight />
          </div>
        </Section>
        <Section title="Rigid Body World" open className="flex pt-[9px] pb-2">
          <button className={`flex-1 rounded-[5px] pt-px ${WIDGET} ${TOOL}`}>Add Rigid Body World</button>
        </Section>
        <Section title="Simplify" open check={false} className="pt-2 pb-1.5">
          <div className="opacity-50">
            <div className="grid grid-cols-2 gap-x-2 gap-y-0.5">
              {[["Subdivision:", "6"], ["Shadow S:", "16"], ["Child P:", "1.000"], ["AO an:", "1.000"]].map(([l, v]) => (
                <div key={l} className={`flex items-center justify-center overflow-hidden rounded-[10px] ${WIDGET}`}>
                  <Num label={l} value={v} tight ticks={v !== "1.000"} className="h-full bg-none bg-[#8c8c8c]" />
                </div>
              ))}
            </div>
            <Check label="Skip Quad t..." name="Skip Quad to Triangles" className="mt-[3px] h-5 pl-[3px]" />
          </div>
        </Section>
        <Section title="Custom Properties" />
      </div>
      <Corner className="top-0 right-0" />
      <CornerLow className="bottom-0 left-0" />
    </section>
  );
}

/* ---------- numbered callouts ---------- */

function Callouts() {
  const arrows = [
    "M765.500 148 800 268M785.500 252 800.500 269 804.500 246",
    "M1033 373 1023 516M1014.500 496 1023 516 1034.500 497",
    "M1230 470.500 1312 541M1303 519.500 1312.500 540.500 1289.500 534.500",
    "M1220 685 1281 714M1268 697 1282 715 1259 714",
    "M1230 814 1371 781M1349 776 1372 781 1353.500 795",
  ];
  return (
    <svg aria-label="Numbered callouts" className="pointer-events-none absolute inset-0 h-full w-full">
      <g stroke="#f00" strokeWidth="4.500" fill="none">
        {arrows.map((d) => <path key={d} d={d} />)}
      </g>
      <g fill="#f00" fontSize="48" className="font-['Liberation_Sans',Arial,sans-serif]">
        <text x="735" y="150">5</text>
        <text x="1003" y="377" className="font-[Roboto,sans-serif]">1</text>
        <text x="1195" y="478">2</text>
        <text x="1186" y="694">3</text>
        <text x="1197" y="832">4</text>
      </g>
    </svg>
  );
}

export default function App() {
  return (
    <div className="relative flex h-screen flex-col overflow-hidden bg-[#727272] font-['DejaVu_Sans_Condensed','DejaVu_Sans',sans-serif] text-[11px] leading-4 text-black">
      <TopBar />
      <div className="flex min-h-0 flex-1">
        <div className="flex min-w-0 flex-1 flex-col">
          <div className="flex min-h-0 flex-1">
            <ToolShelf />
            <Viewport />
            <ViewProperties />
          </div>
          <ViewHeader />
          <Timeline />
        </div>
        <div className="flex w-[223px] shrink-0 flex-col border-l border-black">
          <Outliner />
          <Properties />
        </div>
      </div>
      <Callouts />
    </div>
  );
}
